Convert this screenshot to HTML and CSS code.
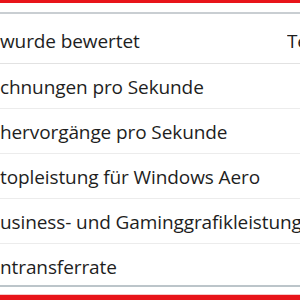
FILE: index.html
```html
<!DOCTYPE html>
<html lang="de">
<head>
<meta charset="utf-8">
<link rel="stylesheet" href="styles.css">
</head>
<body>
<div class="frame">
  <div class="list">
    <div class="row head"><span class="c1">wurde bewertet</span><span class="c2">Teilbewertung</span></div>
    <div class="row"><span class="c1">chnungen pro Sekunde</span></div>
    <div class="row"><span class="c1">hervorgänge pro Sekunde</span></div>
    <div class="row"><span class="c1">topleistung für Windows Aero</span></div>
    <div class="row"><span class="c1">usiness- und Gaminggrafikleistung</span></div>
    <div class="row last"><span class="c1">ntransferrate</span></div>
  </div>
  <div class="pink"></div>
</div>
</body>
</html>
```
FILE: styles.css
```css
html, body {
  margin: 0;
  padding: 0;
  background: #fff;
}
.frame {
  width: 300px;
  height: 300px;
  box-sizing: border-box;
  border-top: 3px solid #e8141a;
  border-bottom: 5px solid #e8141a;
  padding-top: 9px;
  overflow: hidden;
  display: flex;
  flex-direction: column;
  font-family: "Open Sans", "Noto Sans", sans-serif;
  font-size: 19px;
  letter-spacing: -0.1px;
  color: #1e1e1e;
}
.list {
  border-top: 2px solid #c9ced2;
  border-bottom: 2px solid #bcc5ca;
  background: #fff;
}
.row {
  display: grid;
  grid-template-columns: 287px 13px;
  height: 45px;
  box-sizing: border-box;
  padding-top: 2px;
  align-items: center;
  border-bottom: 1px solid #ececec;
  white-space: nowrap;
}
.row.head {
  height: 50px;
  padding-top: 5px;
  border-bottom: 1px solid #e2e2e2;
}
.row.last {
  border-bottom: none;
  height: 41px;
  padding-top: 4px;
}
.c2 {
  overflow: hidden;
}
.pink {
  margin-top: auto;
  height: 1px;
  background: #f6c9ca;
}
```
